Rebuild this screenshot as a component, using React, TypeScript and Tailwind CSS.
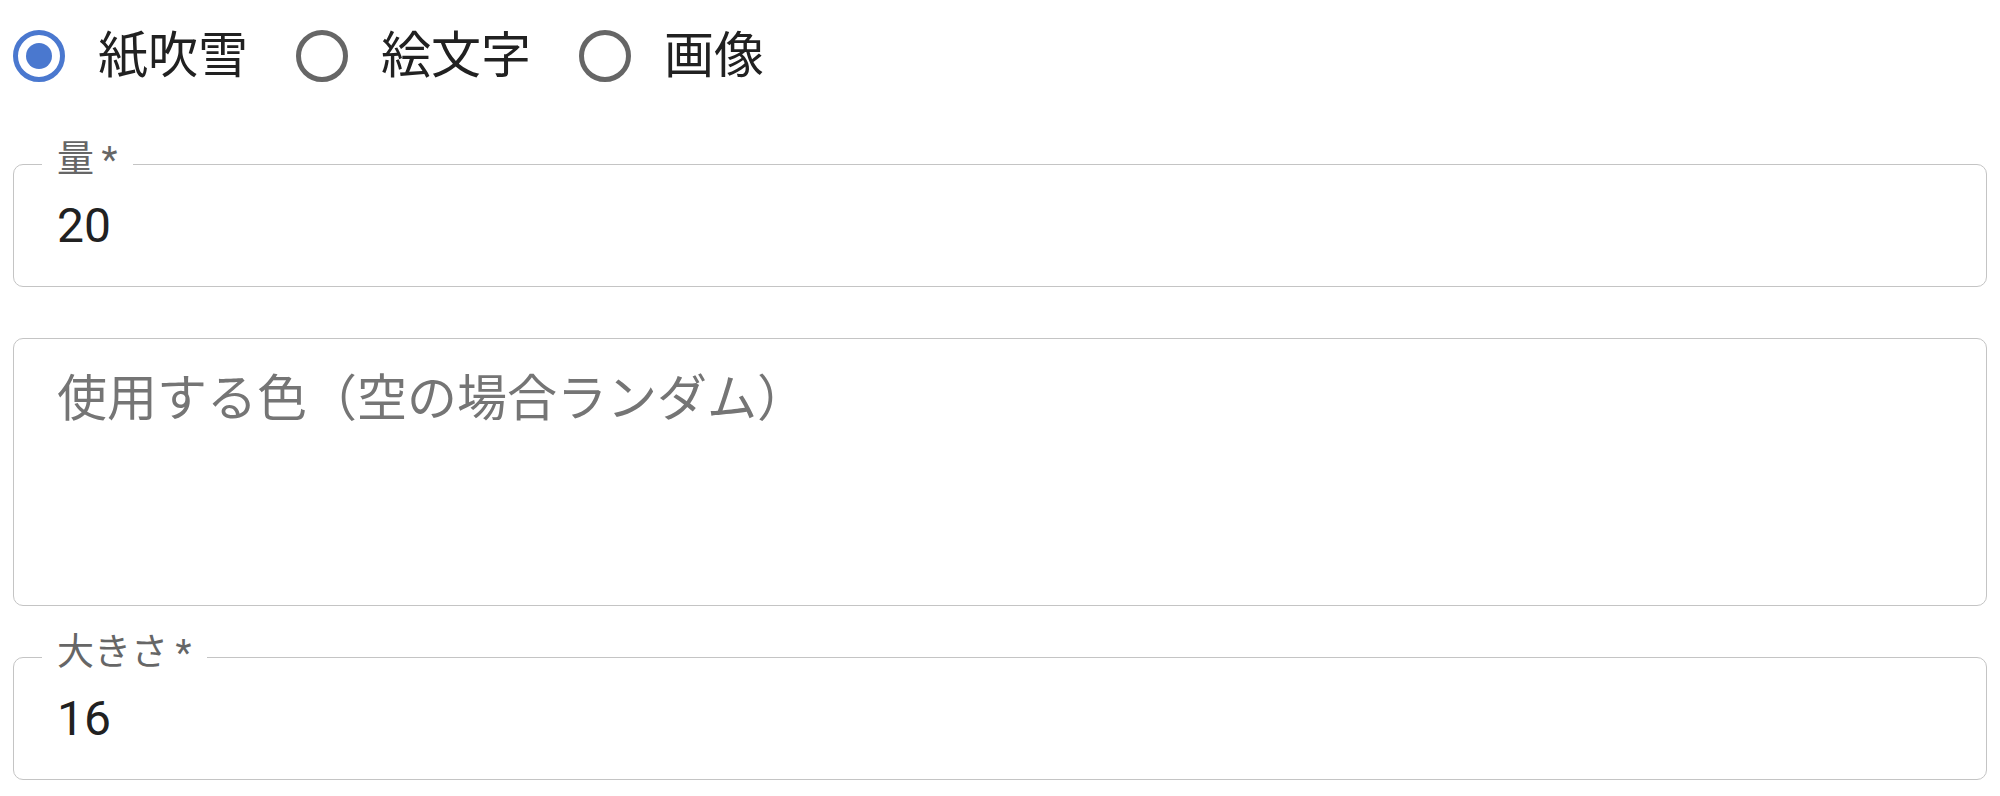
import React from 'react';

const options = ['紙吹雪', '絵文字', '画像'];

function RadioIcon({ checked }: { checked: boolean }) {
  const c = checked ? '#4a78cf' : '#666666';
  return (
    <svg width="52" height="52" viewBox="0 0 52 52" className="shrink-0">
      <circle cx="26" cy="26" r="23.5" fill="none" stroke={c} strokeWidth="5" />
      {checked && <circle cx="26" cy="26" r="13" fill={c} />}
    </svg>
  );
}

function Field({ label, value, height }: { label?: string; value?: string; height: string }) {
  return (
    <div className={`relative w-full rounded-[10px] border border-[#c4c4c4] pl-[43px] pt-[26px] ${height}`}>
      {label && (
        <span className="absolute left-[28px] top-[-23px] bg-white px-[15px] text-[37px] leading-[36px] text-[#666666]">
          {label}&thinsp;*
        </span>
      )}
      {value ? (
        <div className="text-[48px] leading-[69px] text-[#212121]">{value}</div>
      ) : (
        <div className="text-[50px] leading-[69px] text-[#757575]">使用する色（空の場合ランダム）</div>
      )}
    </div>
  );
}

export default function App() {
  const [selected, setSelected] = React.useState(0);

  return (
    <div className="h-[796px] w-[2000px] bg-white px-[13px] font-[Roboto,'Noto_Sans_CJK_JP',sans-serif]">
      {/* Radio group */}
      <div className="flex items-center gap-[48px] pt-[30px]">
        {options.map((o, i) => (
          <label key={o} className="flex cursor-pointer items-center gap-[33px]" onClick={() => setSelected(i)}>
            <RadioIcon checked={selected === i} />
            <span className="text-[50px] leading-[52px] text-[#212121]">{o}</span>
          </label>
        ))}
      </div>

      <div className="mt-[82px]">
        <Field label="量" value="20" height="h-[123px]" />
      </div>
      <div className="mt-[51px]">
        <Field height="h-[268px]" />
      </div>
      <div className="mt-[51px]">
        <Field label="大きさ" value="16" height="h-[123px]" />
      </div>
    </div>
  );
}
